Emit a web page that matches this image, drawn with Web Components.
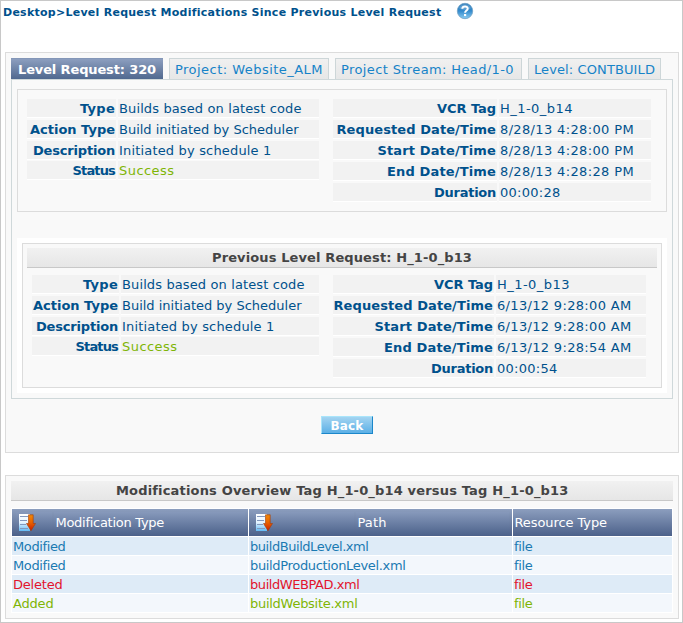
<!DOCTYPE html>
<html lang="en">
<head>
<meta charset="utf-8">
<title>Level Request Modifications</title>
<style>
html, body { margin: 0; height: 100%; }
body { font-family: Verdana, "DejaVu Sans", sans-serif; font-size: 13px; color: #00518c; background: #fff; overflow: hidden; }
</style>
</head>
<body>
<level-page></level-page>
<script>
const define = (name, html, setup) => customElements.define(name, class extends HTMLElement {
  connectedCallback() {
    if (this.shadowRoot) return;
    this.attachShadow({ mode: 'open' }).innerHTML = html(this);
    if (setup) setup(this);
  }
});
const attr = (el, n) => el.getAttribute(n) || '';

/* One line of text, tracked so that it takes the width given in "w". */
define('fit-text', () => `<style>
  :host { display: inline-block; white-space: nowrap; vertical-align: top; }
  span { display: inline-block; vertical-align: top; }
</style><span><slot></slot></span>`, el => {
  const w = parseFloat(attr(el, 'w'));
  const span = el.shadowRoot.querySelector('span');
  const n = el.textContent.length;
  if (w) {
    const own = span.getBoundingClientRect().width;
    span.style.letterSpacing = ((w - own) / n) + 'px';
    el.style.width = w + 'px';
  }
});

define('help-icon', () => `<style>:host { display: block; width: 18px; height: 18px; } svg { display: block; }</style>
<svg width="18" height="18" viewBox="0 0 18 18">
  <defs><linearGradient id="g" x1="0" y1="0" x2="0" y2="1"><stop offset="0" stop-color="#2779ba"/><stop offset=".5" stop-color="#348bcd"/><stop offset="1" stop-color="#8accf2"/></linearGradient></defs>
  <circle cx="9" cy="9" r="7.7" fill="url(#g)" stroke="#6f9fc4" stroke-width=".8"/>
  <path d="M3 6.2A6.6 6.6 0 0 1 15 6.2Q9 9.5 3 6.2Z" fill="#fff" opacity=".22"/>
  <path d="M6.3 6.8C6.5 3.6 11.8 3.7 11.7 6.7C11.6 8.7 9.1 8.5 9.1 10.8" fill="none" stroke="#fff" stroke-width="2"/>
  <rect x="8" y="12" width="2.2" height="2.1" fill="#fff"/>
</svg>`);

define('sort-icon', () => `<style>:host { display: block; width: 18px; height: 18px; } svg { display: block; }</style>
<svg width="18" height="18" viewBox="0 0 18 18">
  <defs><linearGradient id="p" x1="0" y1="0" x2="0" y2="1"><stop offset="0" stop-color="#fff"/><stop offset=".5" stop-color="#e4f3ff"/><stop offset="1" stop-color="#62baf5"/></linearGradient>
  <linearGradient id="a" x1="0" y1="0" x2="0" y2="1"><stop offset="0" stop-color="#f08a08"/><stop offset=".5" stop-color="#e86000"/><stop offset="1" stop-color="#c81c00"/></linearGradient></defs>
  <rect x="0" y="0" width="11" height="17" fill="url(#p)"/>
  <path d="M1 2.5H9M1 6.5H8M1 10.5H7M1 14.5H9" stroke="#8398bd" stroke-width="1"/>
  <path d="M9.5 .8H14.2V9.5H16.5L12 16.8L7.5 9.5H9.5Z" fill="url(#a)" stroke="#a33b08" stroke-width=".6"/>
</svg>`);

define('nav-tab', el => `<style>
  :host { display: block; box-sizing: border-box; height: 21px; padding-left: 5px; white-space: nowrap;
    color: #1683c8; border: 1px solid #cdd6d8; border-bottom: 0; background: linear-gradient(#f0f0f0, #e7e7e7); line-height: 21px; }
  :host([active]) { color: #fff; font-weight: bold; border-color: #8497b8; border-width: 1px 0 0; padding-left: 7px; background: linear-gradient(#8c9ebf, #50698f); }
</style><slot></slot>`, el => { el.style.width = attr(el, 'width') + 'px'; });

define('title-bar', () => `<style>
  :host { display: flex; justify-content: center; box-sizing: border-box; height: 20px; line-height: 19px; font-weight: bold; color: #444;
    background: linear-gradient(#f1f1f1, #e6e6e6); border-bottom: 1px solid #c8c8c8; }
</style><slot></slot>`);

/* A label cell and a value cell on one line. */
define('info-row', el => `<style>
  :host { display: grid; grid-template-columns: var(--label) 1fr; column-gap: 2px; height: 18px; line-height: 20px; }
  div { height: 18px; background: #f2f2f2; box-shadow: 0 1px #fff; white-space: nowrap; }
  .l { text-align: right; font-weight: bold; padding-right: 1px; }
  .v { padding-left: 1px; }
  :host([good]) .v { color: #7fb505; }
</style><div class="l"><fit-text w="${attr(el, 'lw')}">${attr(el, 'label')}</fit-text></div>
<div class="v"><fit-text w="${attr(el, 'vw')}">${attr(el, 'value')}</fit-text></div>`);

define('info-list', () => `<style>
  :host { display: flex; flex-direction: column; gap: 3px; }
  ::slotted([good]) { margin-top: -1px; }
</style><slot></slot>`);

define('push-button', () => `<style>
  :host { display: block; }
  button { display: block; box-sizing: border-box; width: 52px; height: 18px; padding: 1px 0 0; margin: 0; font: bold 12px/16px Verdana, "DejaVu Sans", sans-serif; color: #fff;
    border: 1px solid; border-color: #a9e5fb #1b87ca #1b87ca #a9e5fb; background: linear-gradient(#a3d4f1, #5cb0e6); }
</style><button><slot></slot></button>`);

define('mod-row', el => `<style>
  :host { display: grid; grid-template-columns: 236px 263px 159px; gap: 1px; height: 18px; line-height: 19px; color: #1a7ab2; --bg: #deebf7; }
  :host([alt]) { --bg: #f3f7fc; }
  :host([kind="Deleted"]) { color: #e2142d; }
  :host([kind="Added"]) { color: #7fb505; }
  div { height: 18px; background: var(--bg); padding-left: 1px; white-space: nowrap; }
</style><div><fit-text w="${attr(el, 'kw')}">${attr(el, 'kind')}</fit-text></div>
<div><fit-text w="${attr(el, 'pw')}">${attr(el, 'path')}</fit-text></div>
<div><fit-text w="18.5">file</fit-text></div>`);

define('mod-table', () => `<style>
  :host { display: flex; flex-direction: column; gap: 1px; background: #fff; padding: 1px; }
  .head { display: grid; grid-template-columns: 236px 263px 159px; gap: 1px; height: 27px; color: #fff; line-height: 21px; white-space: nowrap; }
  .head > div { display: grid; column-gap: 2px; padding: 3px 3px 3px 4px; background: linear-gradient(#8c9ebe, #4c618a); }
  .head > .a { grid-template-columns: 36px 1fr; }
  .head > .b { grid-template-columns: 101px 1fr; }
  .head > .c { padding: 3px 1.5px; }
  .head > .a > *, .head > .b > * { background: linear-gradient(#8799bb, #526890); }
  .head > .a > *, .head > .b > * { padding-left: 1.5px; }
  sort-icon { margin-top: 2px; margin-left: 1.5px; }
</style>
<div class="head">
  <div class="a"><span><sort-icon></sort-icon></span><span><fit-text w="108.5">Modification Type</fit-text></span></div>
  <div class="b"><span><sort-icon></sort-icon></span><span><fit-text w="29">Path</fit-text></span></div>
  <div class="c"><fit-text w="92.5">Resource Type</fit-text></div>
</div>
<slot></slot>`);

define('level-page', () => `<style>
  :host { display: block; box-sizing: border-box; width: 683px; height: 623px; border: 1px solid #c8c8c8; padding: 0 4px; background: #fff; }
  header { display: flex; height: 51px; margin-left: -2px; font-size: 11px; font-weight: bold; line-height: 23px; }
  help-icon { margin: 1px 0 0 15px; }
  .panel { box-sizing: border-box; width: 674px; border: 1px solid #dcdcdc; background: #f9f9f9; padding: 5px; }
  .main { height: 401px; }
  nav { display: flex; gap: 6px; }
  .body { box-sizing: border-box; width: 662px; height: 320px; border: 1px solid #cfd8da; padding: 9px 5px 0; }
  .box { box-sizing: border-box; border: 1px solid #dcdcdc; background: #f9f9f9; }
  .now { width: 650px; height: 123px; padding: 9px 0 0 9px; }
  .white { background: #fff; margin-top: 26px; padding: 5px; width: 640px; }
  .prev { width: 640px; height: 145px; padding: 4px; }
  .cols { display: flex; gap: 14px; }
  .prev .cols { margin: 7px 0 0 5px; }
  push-button { width: 52px; margin: 17px 0 0 310px; }
  .mods { height: 144px; margin-top: 22px; }
  mod-table { margin-top: 7px; }
</style>
<header><fit-text w="438">Desktop&gt;Level Request Modifications Since Previous Level Request</fit-text><help-icon></help-icon></header>
<section class="panel main">
  <nav>
    <nav-tab active width="152"><fit-text w="138">Level Request: 320</fit-text></nav-tab>
    <nav-tab width="160"><fit-text w="148">Project: Website_ALM</fit-text></nav-tab>
    <nav-tab width="187"><fit-text w="173">Project Stream: Head/1-0</fit-text></nav-tab>
    <nav-tab width="133"><fit-text w="121">Level: CONTBUILD</fit-text></nav-tab>
  </nav>
  <div class="body">
    <div class="box now"><div class="cols">
      <info-list style="width:292px;--label:89px">
        <info-row label="Type" value="Builds based on latest code" lw="35" vw="182.5"></info-row>
        <info-row label="Action Type" value="Build initiated by Scheduler" lw="85" vw="179.5"></info-row>
        <info-row label="Description" value="Initiated by schedule 1" lw="82" vw="152.5"></info-row>
        <info-row good label="Status" value="Success" lw="42.5" vw="55.5"></info-row>
      </info-list>
      <info-list style="width:318px;--label:164px">
        <info-row label="VCR Tag" value="H_1-0_b14" lw="59" vw="73"></info-row>
        <info-row label="Requested Date/Time" value="8/28/13 4:28:00 PM" lw="159.5" vw="134"></info-row>
        <info-row label="Start Date/Time" value="8/28/13 4:28:00 PM" lw="118.5" vw="134"></info-row>
        <info-row label="End Date/Time" value="8/28/13 4:28:28 PM" lw="109" vw="134"></info-row>
        <info-row label="Duration" value="00:00:28" lw="62" vw="60.5"></info-row>
      </info-list>
    </div></div>
    <div class="white"><div class="box prev">
      <title-bar><fit-text w="260">Previous Level Request: H_1-0_b13</fit-text></title-bar>
      <div class="cols">
        <info-list style="width:287px;--label:87px">
          <info-row label="Type" value="Builds based on latest code" lw="35" vw="182.5"></info-row>
          <info-row label="Action Type" value="Build initiated by Scheduler" lw="85" vw="179.5"></info-row>
          <info-row label="Description" value="Initiated by schedule 1" lw="82" vw="152.5"></info-row>
          <info-row good label="Status" value="Success" lw="42.5" vw="55.5"></info-row>
        </info-list>
        <info-list style="width:313px;--label:161px">
          <info-row label="VCR Tag" value="H_1-0_b13" lw="59" vw="73"></info-row>
          <info-row label="Requested Date/Time" value="6/13/12 9:28:00 AM" lw="159.5" vw="134.5"></info-row>
          <info-row label="Start Date/Time" value="6/13/12 9:28:00 AM" lw="118.5" vw="134.5"></info-row>
          <info-row label="End Date/Time" value="6/13/12 9:28:54 AM" lw="109" vw="134.5"></info-row>
          <info-row label="Duration" value="00:00:54" lw="62" vw="60.5"></info-row>
        </info-list>
      </div>
    </div></div>
  </div>
  <push-button><fit-text w="33">Back</fit-text></push-button>
</section>
<section class="panel mods">
  <title-bar><fit-text w="452">Modifications Overview Tag H_1-0_b14 versus Tag H_1-0_b13</fit-text></title-bar>
  <mod-table>
    <mod-row kind="Modified" path="buildBuildLevel.xml" kw="52.5" pw="118.5"></mod-row>
    <mod-row alt kind="Modified" path="buildProductionLevel.xml" kw="52.5" pw="155.5"></mod-row>
    <mod-row kind="Deleted" path="buildWEBPAD.xml" kw="49.5" pw="109.5"></mod-row>
    <mod-row alt kind="Added" path="buildWebsite.xml" kw="40.5" pw="107.5"></mod-row>
  </mod-table>
</section>`);
</script>
</body>
</html>
